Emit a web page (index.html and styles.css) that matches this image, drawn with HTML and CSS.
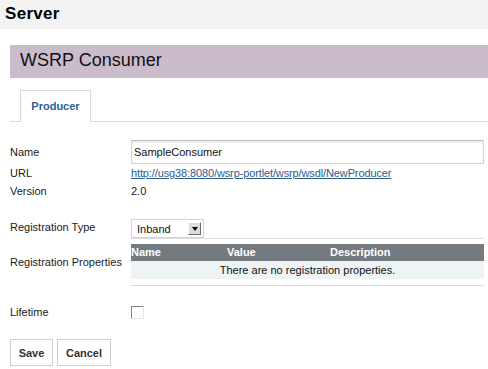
FILE: index.html
```html
<!DOCTYPE html>
<html>
<head>
<meta charset="utf-8">
<link rel="stylesheet" href="styles.css">
</head>
<body>
<div class="header">Server</div>
<div class="content">
  <div class="title">WSRP Consumer</div>
  <div class="tabs"><div class="tab">Producer</div></div>
  <div class="form">
    <div class="row row-name">
      <div class="label">Name</div>
      <div class="field"><div class="input">SampleConsumer</div></div>
    </div>
    <div class="row row-text">
      <div class="label">URL</div>
      <div class="field"><a class="link" href="#">http://usg38:8080/wsrp-portlet/wsrp/wsdl/NewProducer</a></div>
    </div>
    <div class="row row-text">
      <div class="label">Version</div>
      <div class="field">2.0</div>
    </div>
    <div class="row row-select">
      <div class="label">Registration Type</div>
      <div class="field">
        <div class="select"><span class="select-text">Inband</span><span class="select-btn"><span class="tri"></span></span></div>
      </div>
    </div>
    <div class="row row-props">
      <div class="label">Registration Properties</div>
      <div class="field props">
        <div class="thead">
          <span class="c1">Name</span><span class="c2">Value</span><span class="c3">Description</span>
        </div>
        <div class="tempty">There are no registration properties.</div>
      </div>
    </div>
    <div class="row row-life">
      <div class="label">Lifetime</div>
      <div class="field"><span class="check"></span></div>
    </div>
    <div class="buttons">
      <button class="btn btn-save">Save</button>
      <button class="btn btn-cancel">Cancel</button>
    </div>
  </div>
</div>
</body>
</html>
```
FILE: styles.css
```css
html, body {
  margin: 0;
  padding: 0;
  background: #ffffff;
}
body {
  font-family: "Liberation Sans", Arial, sans-serif;
  font-size: 11px;
  color: #1a1a1a;
}
.header {
  height: 29px;
  line-height: 27px;
  background: #f2f3f2;
  padding-left: 5px;
  font-size: 17px;
  font-weight: bold;
  color: #000;
  letter-spacing: 0.3px;
}
.content {
  padding: 16px 0 0 10px;
}
.title {
  height: 33px;
  line-height: 31px;
  background: #cbbccb;
  padding-left: 10px;
  font-size: 18px;
  color: #111;
}
.tabs {
  margin-top: 12px;
  border-bottom: 1px solid #d9d9d9;
  padding-left: 10px;
  display: flex;
}
.tab {
  width: 69px;
  height: 30px;
  line-height: 30px;
  border: 1px solid #d9d9d9;
  border-bottom: none;
  background: #fff;
  margin-bottom: -1px;
  padding-bottom: 1px;
  text-align: center;
  font-weight: bold;
  color: #2f6195;
}
.form {
  padding-right: 4px;
}
.row {
  display: flex;
  align-items: center;
}
.label {
  width: 121px;
  flex: none;
}
.field {
  flex: 1;
  min-width: 0;
}
.row-name {
  margin-top: 18px;
  height: 24px;
}
.input {
  box-sizing: border-box;
  height: 24px;
  line-height: 22px;
  border: 1px solid #d4d4d4;
  border-top-color: #bdbdbd;
  box-shadow: inset 0 2px 2px rgba(0,0,0,0.08);
  padding-left: 2px;
  color: #111;
}
.row-text {
  height: 18px;
}
.link {
  color: #2c5d8f;
  text-decoration: underline;
  letter-spacing: -0.12px;
}
.row-select {
  margin-top: 19px;
  height: 19px;
  align-items: flex-start;
}
.row-select .label {
  line-height: 17px;
}
.select {
  box-sizing: border-box;
  width: 73px;
  height: 19px;
  border: 1px solid #d4d4d4;
  display: flex;
  align-items: center;
  justify-content: space-between;
  padding: 0 2px 0 5px;
}
.select-text {
  color: #111;
}
.select-btn {
  box-sizing: border-box;
  width: 13px;
  height: 13px;
  background: #dcdcdc;
  border: 1px solid;
  border-color: #ffffff #6e6e6e #6e6e6e #ffffff;
  display: flex;
  align-items: center;
  justify-content: center;
}
.tri {
  width: 0;
  height: 0;
  border-left: 3.5px solid transparent;
  border-right: 3.5px solid transparent;
  border-top: 4px solid #000;
}
.row-props {
  height: 48px;
}
.props {
  box-sizing: border-box;
  height: 48px;
  border-top: 1px solid #dcdcdc;
  border-bottom: 1px solid #dcdcdc;
  padding-top: 5px;
}
.thead {
  height: 17px;
  line-height: 17px;
  background: #737b80;
  color: #fff;
  font-weight: bold;
  display: flex;
}
.thead .c1 { width: 96px; }
.thead .c2 { width: 103px; }
.tempty {
  height: 18px;
  line-height: 18px;
  background: #eef3f5;
  text-align: center;
  color: #111;
}
.row-life {
  margin-top: 16px;
  height: 20px;
}
.check {
  display: block;
  box-sizing: border-box;
  width: 13px;
  height: 13px;
  border: 1px solid;
  border-color: #8a8a8a #e6e6e6 #e6e6e6 #8a8a8a;
  background: #fff;
}
.buttons {
  margin-top: 17px;
  display: flex;
  gap: 4px;
}
.btn {
  box-sizing: border-box;
  height: 27px;
  border: 1px solid #cfcfcf;
  background: #fff;
  font-family: "Liberation Sans", Arial, sans-serif;
  font-size: 11px;
  font-weight: bold;
  color: #333;
  padding: 0;
  margin: 0;
}
.btn-save { width: 43px; }
.btn-cancel { width: 54px; }
```
